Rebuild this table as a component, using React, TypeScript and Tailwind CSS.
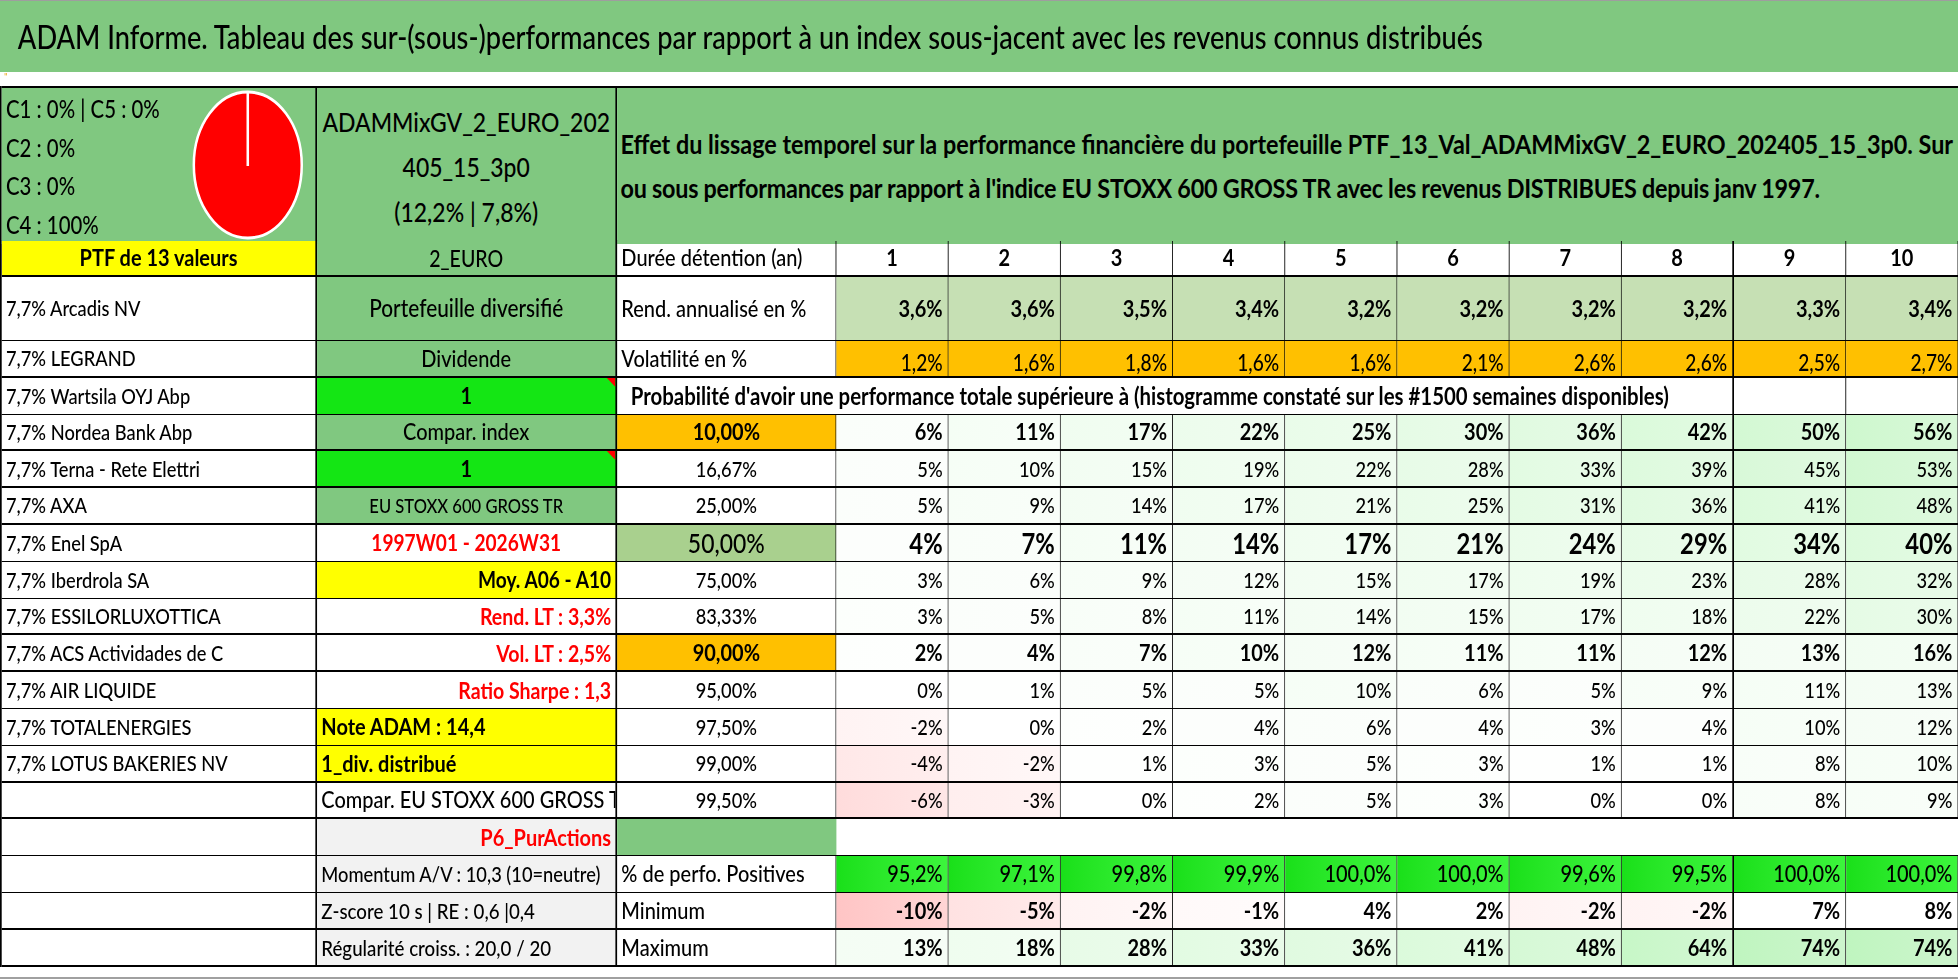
import React from 'react';

// The sheet is drawn at its natural width and squeezed horizontally like the capture.
const COLS = 'grid grid-cols-[371px_353px_258px_repeat(10,minmax(0,1fr))]';

const years = ['1', '2', '3', '4', '5', '6', '7', '8', '9', '10'];
const rend = ['3,6%', '3,6%', '3,5%', '3,4%', '3,2%', '3,2%', '3,2%', '3,2%', '3,3%', '3,4%'];
const vol = ['1,2%', '1,6%', '1,8%', '1,6%', '1,6%', '2,1%', '2,6%', '2,6%', '2,5%', '2,7%'];
const positives = ['95,2%', '97,1%', '99,8%', '99,9%', '100,0%', '100,0%', '99,6%', '99,5%', '100,0%', '100,0%'];
const minimum = [-10, -5, -2, -1, 4, 2, -2, -2, 7, 8];
const maximum = [13, 18, 28, 33, 36, 41, 48, 64, 74, 74];

// colour scale of the probability grid (data bars fading to the right)
function scaleBg(v: number, max = 62) {
  if (v < 0) {
    const t = Math.min(-v / 10, 1);
    const a = Math.round(255 - 58 * t);
    const b = Math.round(255 - 42 * t);
    return `linear-gradient(to right, rgb(255,${a},${a}), rgb(255,${b},${b}))`;
  }
  const t = Math.min(v / max, 1.2);
  const a = Math.round(255 - 54 * t);
  const b = Math.round(255 - 42 * t);
  const g = Math.round(255 - 8 * t);
  return `linear-gradient(to right, rgb(${a},${g},${a}), rgb(${b},${g},${b}))`;
}

const vb = (i: number) => (i === 7 ? 'border-r-2' : 'border-r');

type CellProps = {
  className?: string;
  style?: React.CSSProperties;
  children?: React.ReactNode;
};

function Cell({ className = '', style, children }: CellProps) {
  return (
    <div className={`flex items-center overflow-hidden whitespace-nowrap border-black ${className}`} style={style}>
      {children}
    </div>
  );
}

function Tri() {
  return <span className="absolute top-0 right-0 w-0 h-0 border-l-[10px] border-l-transparent border-t-[9px] border-t-[#ff0000]" />;
}

type ProbRow = {
  name: string;
  b: string;
  bCls: string;
  tri?: boolean;
  c: string;
  cCls?: string;
  vals: number[];
  valCls?: string;
  thick?: boolean;
};

const probRows: ProbRow[] = [
  { name: '7,7% Nordea Bank Abp', b: 'Compar. index', bCls: 'bg-[#80c880] justify-center text-[23.5px]', c: '10,00%', cCls: 'bg-[#ffc000] font-bold text-[23.5px]', vals: [6, 11, 17, 22, 25, 30, 36, 42, 50, 56], valCls: 'font-bold text-[23.5px]', thick: true },
  { name: '7,7% Terna - Rete Elettri', b: '1', bCls: 'bg-[#14e614] justify-center font-bold', tri: true, c: '16,67%', vals: [5, 10, 15, 19, 22, 28, 33, 39, 45, 53], thick: true },
  { name: '7,7% AXA', b: 'EU STOXX 600 GROSS TR', bCls: 'bg-[#80c880] justify-center text-[19.5px]', c: '25,00%', vals: [5, 9, 14, 17, 21, 25, 31, 36, 41, 48], thick: true },
  { name: '7,7% Enel SpA', b: '1997W01 - 2026W31', bCls: 'justify-center font-bold text-[22.5px] text-[#ff0000]', c: '50,00%', cCls: 'bg-[#a9d08e] text-[27px]', vals: [4, 7, 11, 14, 17, 21, 24, 29, 34, 40], valCls: 'font-bold text-[28px]' },
  { name: '7,7% Iberdrola SA', b: 'Moy. A06 - A10', bCls: 'bg-[#ffff00] justify-end pr-[5px] font-bold text-[22.5px]', c: '75,00%', vals: [3, 6, 9, 12, 15, 17, 19, 23, 28, 32] },
  { name: '7,7% ESSILORLUXOTTICA', b: 'Rend. LT : 3,3%', bCls: 'justify-end pr-[5px] font-bold text-[23px] text-[#ff0000]', c: '83,33%', vals: [3, 5, 8, 11, 14, 15, 17, 18, 22, 30], thick: true },
  { name: '7,7% ACS Actividades de C', b: 'Vol. LT : 2,5%', bCls: 'justify-end pr-[5px] font-bold text-[23px] text-[#ff0000]', c: '90,00%', cCls: 'bg-[#ffc000] font-bold text-[23.5px]', vals: [2, 4, 7, 10, 12, 11, 11, 12, 13, 16], valCls: 'font-bold text-[23.5px]', thick: true },
  { name: '7,7% AIR LIQUIDE', b: 'Ratio Sharpe : 1,3', bCls: 'justify-end pr-[5px] font-bold text-[23px] text-[#ff0000]', c: '95,00%', vals: [0, 1, 5, 5, 10, 6, 5, 9, 11, 13] },
  { name: '7,7% TOTALENERGIES', b: 'Note ADAM : 14,4', bCls: 'bg-[#ffff00] pl-[5px] font-bold', c: '97,50%', vals: [-2, 0, 2, 4, 6, 4, 3, 4, 10, 12] },
  { name: '7,7% LOTUS BAKERIES NV', b: '1_div. distribué', bCls: 'bg-[#ffff00] pl-[5px] font-bold', c: '99,00%', vals: [-4, -2, 1, 3, 5, 3, 1, 1, 8, 10], thick: true },
  { name: '', b: 'Compar. EU STOXX 600 GROSS TR', bCls: 'pl-[5px]', c: '99,50%', vals: [-6, -3, 0, 2, 5, 3, 0, 0, 8, 9], thick: true },
];

export default function App() {
  return (
    <div className="w-[1958px] h-[979px] bg-white overflow-hidden">
      <div className="w-[2304px] h-[979px] origin-top-left scale-x-[0.85] flex flex-col font-['Lato',sans-serif] font-medium text-[23.5px] text-black">
        {/* title */}
        <div className="h-[72px] shrink-0 bg-[#80c880] border-t border-[#9e9e9e] flex items-center pl-[21px] text-[32px]">
          ADAM Informe. Tableau des sur-(sous-)performances par rapport à un index sous-jacent avec les revenus connus distribués
        </div>
        <div className="h-[14px] shrink-0 flex items-start pl-[5px] text-[9px] leading-[9px] text-[#e8a000]">''</div>

        <div className="border-l-2 border-black flex flex-col">
          {/* top block */}
          <div className={`${COLS} h-[155px] border-t-2 border-b border-black`}>
            <div className="bg-[#80c880] border-r-2 border-black flex justify-between">
              <div className="pl-[5px] pt-[2px] leading-[38.5px] text-[24px]">
                <div>C1 : 0% | C5 : 0%</div>
                <div>C2 : 0%</div>
                <div>C3 : 0%</div>
                <div>C4 : 100%</div>
              </div>
              <svg width="131" height="152" viewBox="0 0 131 152" className="mr-[14px] mt-[1px]">
                <ellipse cx="65.5" cy="76" rx="63.5" ry="73" fill="#ff0000" stroke="#ffffff" strokeWidth="3" />
                <line x1="65.5" y1="4" x2="65.5" y2="77" stroke="#ffffff" strokeWidth="3" />
              </svg>
            </div>
            <div className="bg-[#80c880] border-r-2 border-black flex flex-col items-center justify-center text-[27px] leading-[45px]">
              <div>ADAMMixGV_2_EURO_202</div>
              <div>405_15_3p0</div>
              <div>(12,2% | 7,8%)</div>
            </div>
            <div className="col-span-11 bg-[#80c880] flex flex-col justify-center pl-[4px] font-bold text-[27.5px] leading-[44px] whitespace-nowrap">
              <div>Effet du lissage temporel sur la performance financière du portefeuille PTF_13_Val_ADAMMixGV_2_EURO_202405_15_3p0. Sur</div>
              <div className="tracking-[-0.3px]">ou sous performances par rapport à l'indice EU STOXX 600 GROSS TR avec les revenus DISTRIBUES depuis janv 1997.</div>
            </div>
          </div>

          {/* header */}
          <div className={`${COLS} h-[36px] border-b-2 border-black`}>
            <Cell className="bg-[#ffff00] border-r-2 justify-center font-bold">PTF de 13 valeurs</Cell>
            <Cell className="bg-[#80c880] border-r-2 justify-center text-[23px]">2_EURO</Cell>
            <Cell className="border-r pl-[5px]">Durée détention (an)</Cell>
            {years.map((y, i) => (
              <Cell key={y} className={`${vb(i)} justify-center font-bold`}>{y}</Cell>
            ))}
          </div>

          {/* rendement */}
          <div className={`${COLS} h-[64px] border-b border-black`}>
            <Cell className="border-r-2 pl-[5px] text-[21.5px]">7,7% Arcadis NV</Cell>
            <Cell className="bg-[#80c880] border-r-2 justify-center text-[24.5px]">Portefeuille diversifié</Cell>
            <Cell className="border-r pl-[5px]">Rend. annualisé en %</Cell>
            {rend.map((v, i) => (
              <Cell key={i} className={`${vb(i)} bg-[#c6e0b4] justify-end pr-[6px] font-bold`}>{v}</Cell>
            ))}
          </div>

          {/* volatilité */}
          <div className={`${COLS} h-[36.8px] border-b-2 border-black`}>
            <Cell className="border-r-2 pl-[5px] text-[21.5px]">7,7% LEGRAND</Cell>
            <Cell className="bg-[#80c880] border-r-2 justify-center">Dividende</Cell>
            <Cell className="border-r pl-[5px]">Volatilité en %</Cell>
            {vol.map((v, i) => (
              <Cell key={i} className={`${vb(i)} bg-[#ffc000] items-end justify-end pr-[6px] text-[22.5px] leading-[27px]`}>{v}</Cell>
            ))}
          </div>

          {/* probabilité title */}
          <div className={`${COLS} h-[36.8px] border-b border-black`}>
            <Cell className="border-r-2 pl-[5px] text-[21.5px]">7,7% Wartsila OYJ Abp</Cell>
            <Cell className="relative bg-[#14e614] border-r-2 justify-center font-bold">1<Tri /></Cell>
            <Cell className="col-span-9 border-r-2 pl-[16px] font-bold text-[24px]">
              Probabilité d'avoir une performance totale supérieure à (histogramme constaté sur les #1500 semaines disponibles)
            </Cell>
            <Cell className="border-r" />
            <Cell className="border-r" />
          </div>

          {probRows.map((r, k) => (
            <div key={k} className={`${COLS} h-[36.8px] ${r.thick ? 'border-b-2' : 'border-b'} border-black`}>
              <Cell className="border-r-2 pl-[5px] text-[21.5px]">{r.name}</Cell>
              <Cell className={`relative border-r-2 ${r.bCls}`}>
                {r.b}
                {r.tri && <Tri />}
              </Cell>
              <Cell className={`border-r justify-center ${r.cCls ?? 'text-[21.5px]'}`}>{r.c}</Cell>
              {r.vals.map((v, i) => (
                <Cell key={i} className={`${vb(i)} justify-end pr-[6px] ${r.valCls ?? 'text-[21.5px]'}`} style={{ background: scaleBg(v) }}>
                  {v}%
                </Cell>
              ))}
            </div>
          ))}

          {/* P6 */}
          <div className={`${COLS} h-[36.8px] border-b border-black`}>
            <Cell className="border-r-2" />
            <Cell className="bg-[#f2f2f2] border-r-2 justify-end pr-[5px] font-bold text-[#ff0000]">P6_PurActions</Cell>
            <Cell className="bg-[#80c880]" />
            <Cell className="col-span-10" />
          </div>

          {/* positives */}
          <div className={`${COLS} h-[36.8px] border-b border-black`}>
            <Cell className="border-r-2" />
            <Cell className="bg-[#f2f2f2] border-r-2 pl-[5px] text-[21.5px]">Momentum A/V : 10,3 (10=neutre)</Cell>
            <Cell className="border-r pl-[5px]">% de perfo. Positives</Cell>
            {positives.map((v, i) => (
              <Cell key={i} className={`${vb(i)} justify-end pr-[6px] bg-gradient-to-r from-[#19e019] to-[#3cf53c]`}>{v}</Cell>
            ))}
          </div>

          {/* minimum */}
          <div className={`${COLS} h-[36.8px] border-b-2 border-black`}>
            <Cell className="border-r-2" />
            <Cell className="bg-[#f2f2f2] border-r-2 pl-[5px] text-[22px]">Z-score 10 s | RE : 0,6 |0,4</Cell>
            <Cell className="border-r pl-[5px]">Minimum</Cell>
            {minimum.map((v, i) => (
              <Cell key={i} className={`${vb(i)} justify-end pr-[6px] font-bold`} style={{ background: v < 0 ? scaleBg(v) : '#ffffff' }}>
                {v}%
              </Cell>
            ))}
          </div>

          {/* maximum */}
          <div className={`${COLS} h-[36.8px] border-b-2 border-black`}>
            <Cell className="border-r-2" />
            <Cell className="bg-[#f2f2f2] border-r-2 pl-[5px] text-[22px]">Régularité croiss. : 20,0 / 20</Cell>
            <Cell className="border-r pl-[5px]">Maximum</Cell>
            {maximum.map((v, i) => (
              <Cell key={i} className={`${vb(i)} justify-end pr-[6px] font-bold`} style={{ background: scaleBg(v) }}>
                {v}%
              </Cell>
            ))}
          </div>
        </div>

        <div className="flex-1 border-b-2 border-[#a0a0a0]" />
      </div>
    </div>
  );
}
